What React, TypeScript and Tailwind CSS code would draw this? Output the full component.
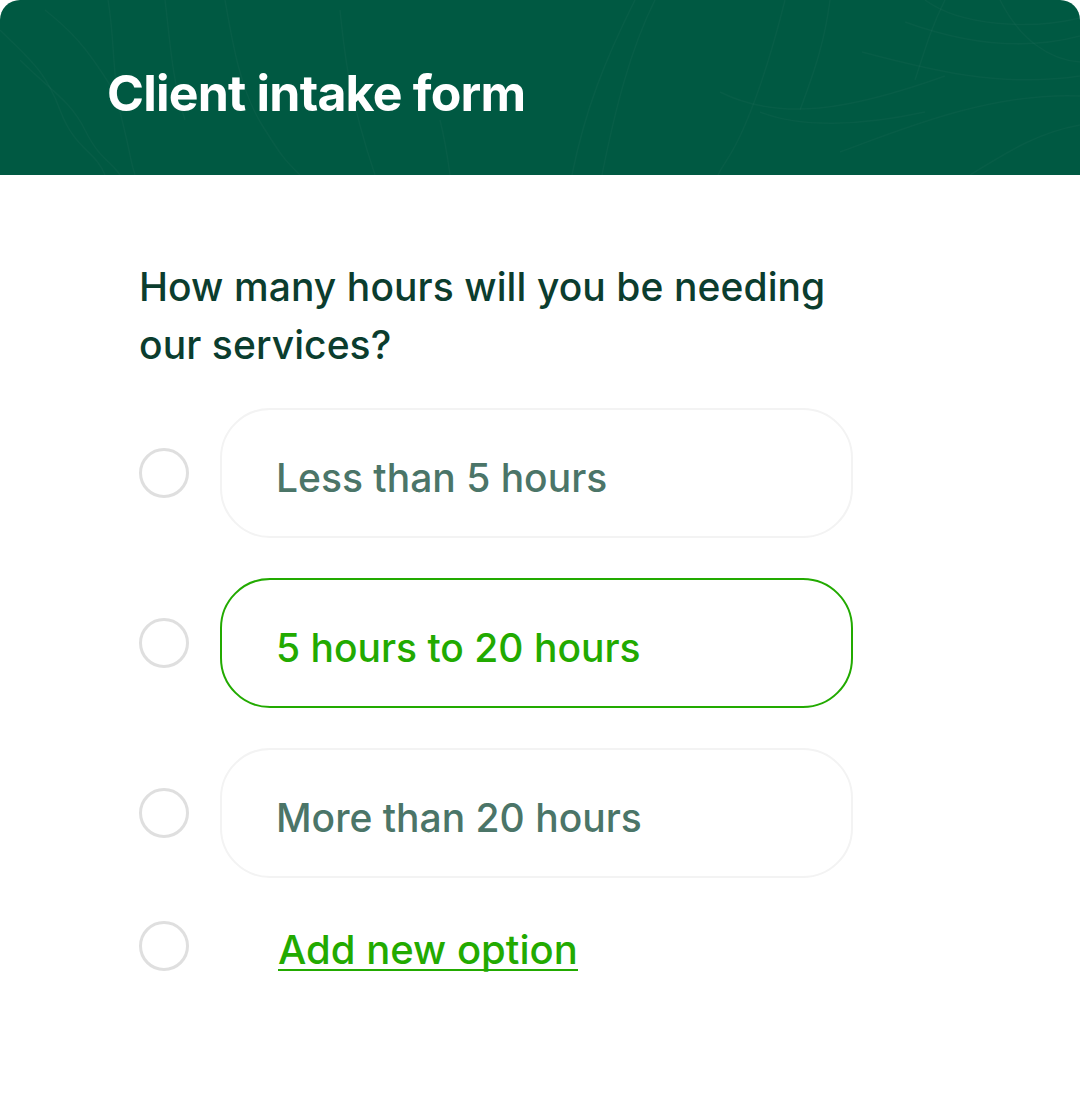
const options = [
  { label: 'Less than 5 hours', active: false },
  { label: '5 hours to 20 hours', active: true },
  { label: 'More than 20 hours', active: false },
];

// faint contour lines on the header
const lines = [
  'M0 30C30 60 45 70 60 110S95 150 105 175',
  'M20 60C50 90 70 100 85 130S110 160 120 175',
  'M45 10C70 30 85 45 110 85',
  'M108 0C115 40 112 80 122 120S130 160 135 175',
  'M165 0C170 40 172 80 185 120',
  'M225 0C232 40 240 90 262 125S285 160 300 175',
  'M340 10C345 60 350 100 375 175',
  'M440 120C445 140 448 160 450 175',
  'M635 0C605 60 585 110 572 175',
  'M655 0C630 50 615 110 602 175',
  'M785 0C775 40 760 90 745 125S725 160 718 175',
  'M830 0C825 40 815 70 800 110',
  'M945 0C930 30 925 50 915 80',
  'M760 112C800 128 860 126 925 112',
  'M720 92C780 122 850 110 945 76',
  'M862 52C930 70 1000 88 1080 76',
  'M840 152C900 130 990 92 1080 96',
  'M905 22C960 42 1020 52 1080 36',
  'M925 0C960 26 1030 30 1080 18',
  'M970 175C1010 150 1040 132 1080 125',
  'M1000 0C1020 40 1050 60 1080 62',
];

const HeaderPattern = () => (
  <svg className="absolute inset-0 h-full w-full" viewBox="0 0 1080 175" fill="none" stroke="#ffffff" strokeOpacity="0.028" strokeWidth="1.5">
    {lines.map((d) => (
      <path key={d} d={d} />
    ))}
  </svg>
);

export default function App() {
  return (
    <div className="h-[1093px] w-[1080px] bg-white font-['Inter',sans-serif]">
      <div className="relative flex h-[175px] items-center overflow-hidden rounded-t-[20px] bg-[#005942] pl-[107px] pt-[11px]">
        <HeaderPattern />
        <h1 className="relative text-[50px] font-bold tracking-[-0.016em] text-white">Client intake form</h1>
      </div>

      <div className="pl-[139px] pt-[83px]">
        <h2 className="w-[720px] text-[39px] leading-[58px] font-[550] tracking-[0.002em] text-[#0b3d2e]">
          How many hours will you be needing our services?
        </h2>

        <div className="mt-[34px] flex flex-col gap-[40px]">
          {options.map((option) => (
            <div key={option.label} className="flex items-center gap-[31px]">
              <span className="h-[50px] w-[50px] shrink-0 rounded-full border-[3px] border-[#dfdfdf]" />
              <div
                className={`flex h-[130px] w-[633px] items-center rounded-[50px] pl-[54px] pt-[10px] text-[39px] font-[550] ${
                  option.active ? 'border-2 border-[#22aa00] text-[#22aa00]' : 'border-2 border-[#f3f3f3] text-[#4b7568]'
                }`}
              >
                {option.label}
              </div>
            </div>
          ))}
        </div>

        <div className="mt-[43px] flex items-start gap-[89px]">
          <span className="h-[50px] w-[50px] shrink-0 rounded-full border-[3px] border-[#dfdfdf]" />
          <a className="mt-[10px] border-b-[2px] border-[#22aa00] text-[40px] leading-[38px] font-[550] text-[#22aa00]">
            Add new option
          </a>
        </div>
      </div>
    </div>
  );
}
